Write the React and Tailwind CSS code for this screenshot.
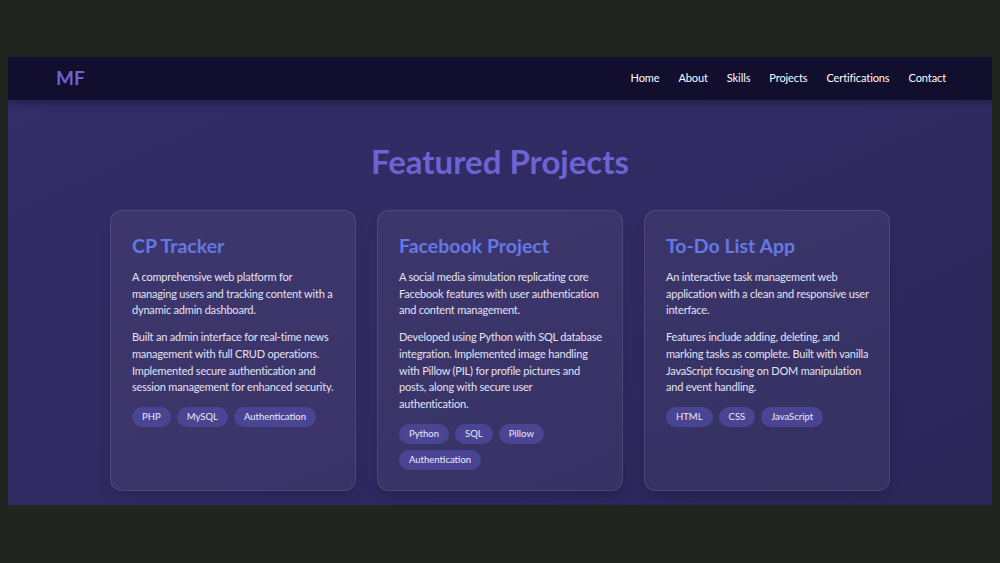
import React from 'react';

// lines are kept as in the design so the wrapping matches
const projects = [
  {
    title: 'CP Tracker',
    intro: ['A comprehensive web platform for', 'managing users and tracking content with a', 'dynamic admin dashboard.'],
    detail: [
      'Built an admin interface for real-time news',
      'management with full CRUD operations.',
      'Implemented secure authentication and',
      'session management for enhanced security.',
    ],
    tags: ['PHP', 'MySQL', 'Authentication'],
  },
  {
    title: 'Facebook Project',
    intro: ['A social media simulation replicating core', 'Facebook features with user authentication', 'and content management.'],
    detail: [
      'Developed using Python with SQL database',
      'integration. Implemented image handling',
      'with Pillow (PIL) for profile pictures and',
      'posts, along with secure user',
      'authentication.',
    ],
    tags: ['Python', 'SQL', 'Pillow', 'Authentication'],
  },
  {
    title: 'To-Do List App',
    intro: ['An interactive task management web', 'application with a clean and responsive user', 'interface.'],
    detail: [
      'Features include adding, deleting, and',
      'marking tasks as complete. Built with vanilla',
      'JavaScript focusing on DOM manipulation',
      'and event handling.',
    ],
    tags: ['HTML', 'CSS', 'JavaScript'],
  },
];

const links = ['Home', 'About', 'Skills', 'Projects', 'Certifications', 'Contact'];

const Lines = ({ lines, className }) => (
  <p className={className}>
    {lines.map((l, i) => (
      <React.Fragment key={i}>
        {l}
        {i < lines.length - 1 && <br />}
      </React.Fragment>
    ))}
  </p>
);

const ProjectCard = ({ title, intro, detail, tags }) => (
  <div className="rounded-xl border border-white/10 bg-white/[0.05] px-[21px] pt-[22px] pb-[20px] shadow-lg">
    <h3 className="text-[19.5px] font-bold leading-[26px] text-[#6478e6]">{title}</h3>
    <Lines lines={intro} className="mt-[10px] whitespace-nowrap text-[11px] leading-[16.7px] tracking-[-0.2px] text-[#e4e2f2]" />
    <Lines lines={detail} className="mt-[10px] whitespace-nowrap text-[11px] leading-[16.7px] tracking-[-0.2px] text-[#e4e2f2]" />
    <div className="mt-[11px] flex flex-wrap gap-x-[6px] gap-y-[6px]">
      {tags.map((t) => (
        <span key={t} className="rounded-full bg-[#4a4593] px-[10px] py-[3px] text-[9.5px] leading-[14px] text-[#eceaff]">
          {t}
        </span>
      ))}
    </div>
  </div>
);

export default function App() {
  return (
    <div
      className="h-[563px] w-[1000px] overflow-hidden bg-[#21241f] px-2 pt-[57px]"
      style={{ fontFamily: 'Lato, "Noto Sans", sans-serif' }}
    >
      <div className="h-[448px] overflow-hidden bg-gradient-to-br from-[#332d68] via-[#312b63] to-[#2a2657]">
        {/* Navbar */}
        <nav className="flex h-[43px] items-center justify-between bg-[#110e2e] pl-12 pr-[46px] shadow-[0_2px_8px_rgba(0,0,0,0.35)]">
          <span className="text-[19px] font-bold text-[#6b63d4]">MF</span>
          <ul className="flex gap-[19px] text-[11px] tracking-[-0.1px] text-white">
            {links.map((l) => (
              <li key={l}>{l}</li>
            ))}
          </ul>
        </nav>

        {/* Projects */}
        <section className="pt-[42px]">
          <h2 className="text-center text-[33px] font-bold leading-[38px] text-[#6d63d4]">Featured Projects</h2>
          <div className="mx-auto mt-[30px] grid w-[780px] grid-cols-3 gap-[21px]">
            {projects.map((p) => (
              <ProjectCard key={p.title} {...p} />
            ))}
          </div>
        </section>
      </div>
    </div>
  );
}
